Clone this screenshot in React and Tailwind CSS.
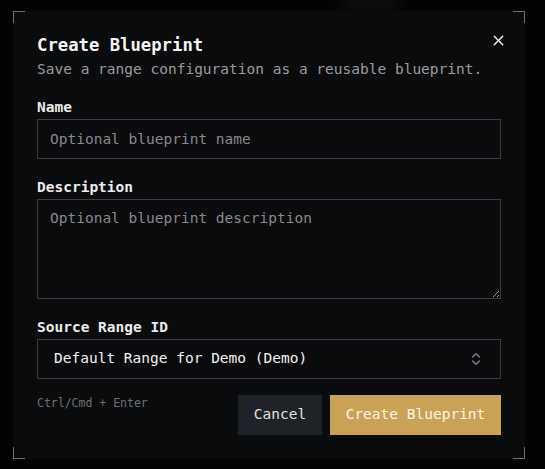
import React from "react";
import { X, ChevronsUpDown } from "lucide-react";

const mono = "font-['DejaVu_Sans_Mono','Liberation_Mono',monospace]";

function Corner({ className }) {
  return <span className={`pointer-events-none absolute h-[12px] w-[12px] border-[#6f7074] ${className}`} />;
}

export default function App() {
  return (
    <div className={`relative min-h-[469px] w-full overflow-hidden bg-[#030303] ${mono}`}>
      {/* faint glow bleeding out above the dialog */}
      <div className="pointer-events-none absolute left-[340px] top-[-4px] h-[14px] w-[60px] rounded-full bg-[#121316] blur-[8px]" />

      <div className="pl-[13px] pt-[11px]">
        <div className="relative flex h-[448px] w-[512px] flex-col bg-[#0a0b0d] p-6">
          <Corner className="left-0 top-0 border-l border-t" />
          <Corner className="right-0 top-0 border-r border-t" />
          <Corner className="bottom-0 left-0 border-b border-l" />
          <Corner className="bottom-0 right-0 border-b border-r" />

          <button className="absolute left-[475px] top-[19px] flex h-[20px] w-[20px] items-center justify-center text-[#f2f2f2]">
            <X size={17} strokeWidth={2} />
          </button>

          <h2 className="text-[17.25px] font-bold leading-[20px] text-[#f4f4f4]">Create Blueprint</h2>
          <p className="mt-1 text-[14.5px] leading-[20px] text-[#9a9b9d]">
            Save a range configuration as a reusable blueprint.
          </p>

          <label className="mt-[18px] text-[14.5px] font-bold leading-[20px] text-[#ececec]">Name</label>
          <input
            className="mt-[2px] h-[40px] w-full border border-[#3a3c40] bg-transparent px-[12px] text-[14.5px] text-[#e6e6e6] outline-none placeholder:text-[#88898b]"
            placeholder="Optional blueprint name"
          />

          <label className="mt-[18px] text-[14.5px] font-bold leading-[20px] text-[#ececec]">Description</label>
          <textarea
            className="mt-[2px] h-[100px] w-full border border-[#3a3c40] bg-transparent px-[12px] py-[8px] text-[14.5px] leading-[20px] text-[#e6e6e6] outline-none [color-scheme:dark] placeholder:text-[#88898b]"
            placeholder="Optional blueprint description"
          />

          <label className="mt-[18px] text-[14.5px] font-bold leading-[20px] text-[#ececec]">Source Range ID</label>
          <button className="mt-[2px] flex h-[40px] w-full items-center justify-between border border-[#3a3c40] pl-[16px] pr-[16px] text-left">
            <span className="text-[14.5px] text-[#f2f2f2]">Default Range for Demo (Demo)</span>
            <ChevronsUpDown size={16} strokeWidth={2} className="text-[#85868a]" />
          </button>

          <div className="mt-4 flex items-start justify-between">
            <span className="text-[11.5px] leading-[16px] text-[#6f7073]">Ctrl/Cmd + Enter</span>
            <div className="flex gap-2">
              <button className="h-[40px] w-[84px] bg-[#1f2226] text-[14.5px] text-[#e0e0e0]">Cancel</button>
              <button className="h-[40px] w-[171px] bg-[#c9a255] text-[14.5px] text-[#fdf6e4]">Create Blueprint</button>
            </div>
          </div>
        </div>
      </div>
    </div>
  );
}
